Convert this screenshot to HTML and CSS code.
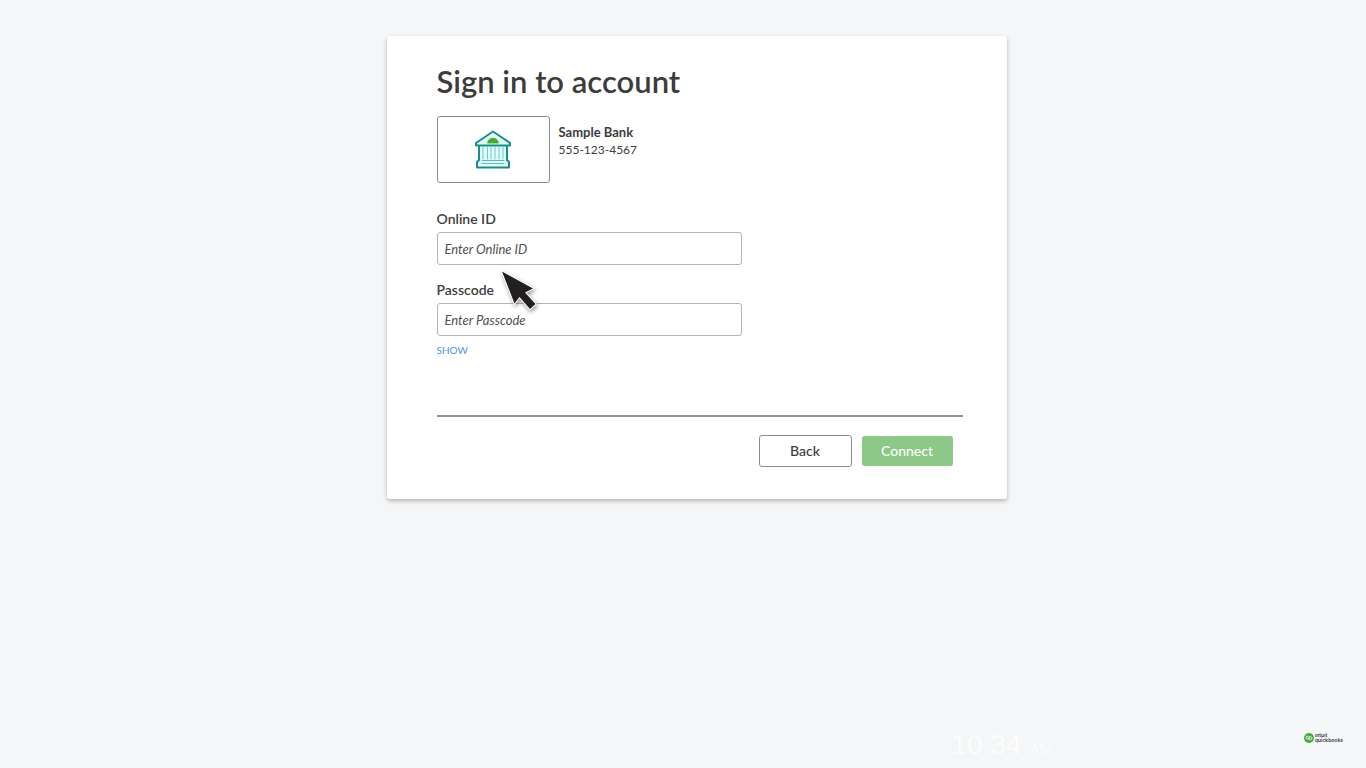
FILE: index.html
```html
<!DOCTYPE html>
<html lang="en">
<head>
  <meta charset="UTF-8">
  <meta name="viewport" content="width=device-width, initial-scale=1.0">
  <title>Sign in to account</title>
  <link rel="stylesheet" href="styles.css">
</head>
<body>
  <main>
    <form class="card">
      <h1>Sign in to account</h1>

      <div class="bank">
        <div class="bank-logo">
          <svg width="38" height="40" viewBox="0 0 38 40" fill="none" stroke-linecap="round" stroke-linejoin="round">
            <path d="M5 15h28v16H5z" fill="#e2fafa"/>
            <path d="M19 1.500L36 13v2.500H2V13z" fill="#e6fbf9" stroke="#168f88" stroke-width="2"/>
            <path d="M13.500 13a5.500 5 0 0 1 11 0z" fill="#43ad2b" stroke="#43ad2b" stroke-width="0.500"/>
            <path d="M5 16v14M33 16v14" stroke="#168f88" stroke-width="2"/>
            <path d="M9 17v12M13.500 17v12M17 17v12M21 17v12M25 17v12M29 17v12" stroke="#6ccbd0"/>
            <path d="M5 30l-2 2v5.500h32V32l-2-2" fill="#e2fafa" stroke="#168f88" stroke-width="2"/>
            <path d="M8 30.500h22M8 33.500h22" stroke="#55bec2"/>
          </svg>
        </div>
        <div class="bank-info">
          <strong>Sample Bank</strong>
          <span class="phone">555-123-4567</span>
        </div>
      </div>

      <div class="field">
        <label for="online-id">Online ID</label>
        <input type="text" id="online-id" placeholder="Enter Online ID" autocomplete="off">
      </div>
      <div class="field">
        <label for="passcode">Passcode</label>
        <input type="password" id="passcode" placeholder="Enter Passcode" autocomplete="off">
      </div>
      <button type="button" class="show">SHOW</button>

      <hr>

      <div class="actions">
        <button type="button" class="btn">Back</button>
        <button type="submit" class="btn btn-connect">Connect</button>
      </div>

      <!-- Mouse pointer -->
      <svg class="pointer" width="60" height="55" viewBox="0 0 60 55">
        <path d="M12 9.500L43 26.500L35 30.500L45.500 42L40 47L29.500 35L24.500 41.500z" fill="#231f20" stroke="#fff" stroke-width="2" paint-order="stroke"/>
      </svg>
    </form>
  </main>

  <footer>
    <div class="clock">
      <span class="time">10 34</span>
      <span class="period">AM</span>
    </div>
    <div class="brand">
      <svg width="10" height="10" viewBox="0 0 20 20" fill="none">
        <circle cx="10" cy="10" r="10" fill="#3fae3a"/>
        <path d="M8.500 14V6.500H7a3 3 0 0 0 0 6M11.500 6v7.500H13a3 3 0 0 0 0-6" stroke="#fff" stroke-width="1.600"/>
      </svg>
      <div class="brand-name">
        <span>ıntuıt</span>
        <span>quickbooks</span>
      </div>
    </div>
  </footer>
</body>
</html>
```

FILE: styles.css
```css
/* Global styles */
* {
  box-sizing: border-box;
}

body {
  margin: 0;
  min-height: 100vh;
  display: flex;
  flex-direction: column;
  background-color: #f4f6f8;
  color: #3c3c3c;
  font-family: Lato, "Open Sans", sans-serif;
}

main {
  flex: 1;
  padding: 36px 0 36px 27px;
}

/* Sign in card */
.card {
  position: relative;
  max-width: 620px;
  margin: 0 auto;
  padding: 27px 44px 32px 50px;
  background-color: #fff;
  border-radius: 3px;
  box-shadow: 0 2px 4px rgba(0, 0, 0, 0.28);
}

h1 {
  margin: 0 0 17px;
  font-size: 31px;
  font-weight: 600;
  line-height: 36px;
}

.bank {
  display: flex;
  gap: 9px;
  margin-bottom: 26px;
}

.bank-logo {
  display: flex;
  align-items: center;
  justify-content: center;
  width: 113px;
  height: 67px;
  border: 1px solid #8c8c8c;
  border-radius: 3px;
}

.bank-info {
  display: flex;
  flex-direction: column;
  padding-top: 8px;
  font-size: 13px;
  line-height: 17px;
}

.phone {
  font-size: 12px;
}

/* Fields */
.field {
  display: flex;
  flex-direction: column;
  max-width: 305px;
  margin-bottom: 15px;
}

.field label {
  margin-bottom: 3px;
  font-size: 14px;
  font-weight: 600;
  line-height: 20px;
}

.field input {
  height: 33px;
  padding: 0 7px;
  border: 1px solid #b4b4b4;
  border-radius: 3px;
  font-family: inherit;
  font-size: 13px;
  color: #3c3c3c;
}

.field input::placeholder {
  color: #505050;
  font-style: italic;
}

.show {
  display: block;
  margin-top: -8px;
  padding: 0;
  border: none;
  background: none;
  color: #4a94dc;
  font-family: inherit;
  font-size: 10px;
  line-height: 14px;
}

hr {
  height: 2px;
  margin: 58px 0 18px;
  border: none;
  background-color: #929292;
}

/* Buttons */
.actions {
  display: flex;
  justify-content: flex-end;
  gap: 9px;
  padding-right: 9px;
}

.btn {
  width: 93px;
  height: 32px;
  padding: 0 0 2px;
  border: 1px solid #8c8c8c;
  border-radius: 3px;
  background-color: #fff;
  color: #3c3c3c;
  font-family: inherit;
  font-size: 14px;
  font-weight: 500;
}

.btn-connect {
  border-color: #fff;
  background-color: #8cc886;
  background-clip: padding-box;
  color: #fff;
}

.pointer {
  position: absolute;
  top: 226px;
  left: 103px;
  filter: drop-shadow(1px 2px 2px rgba(0, 0, 0, 0.4));
  pointer-events: none;
}

/* Footer */
footer {
  display: flex;
  align-items: flex-end;
  justify-content: flex-end;
  gap: 252px;
  padding: 0 23px 7px 0;
}

.clock {
  display: flex;
  align-items: baseline;
  gap: 8px;
  color: #fcfdfd;
  font-family: "Liberation Sans Narrow", "Liberation Sans", sans-serif;
}

.time {
  font-size: 28px;
  line-height: 32px;
}

.period {
  font-family: "Liberation Sans", sans-serif;
  font-size: 15px;
}

.brand {
  display: flex;
  align-items: center;
  gap: 1px;
  padding-bottom: 18px;
}

.brand-name {
  display: flex;
  flex-direction: column;
  color: #393a3d;
  font-family: Inter, sans-serif;
  font-size: 5px;
  font-weight: 600;
  line-height: 5px;
}
```
